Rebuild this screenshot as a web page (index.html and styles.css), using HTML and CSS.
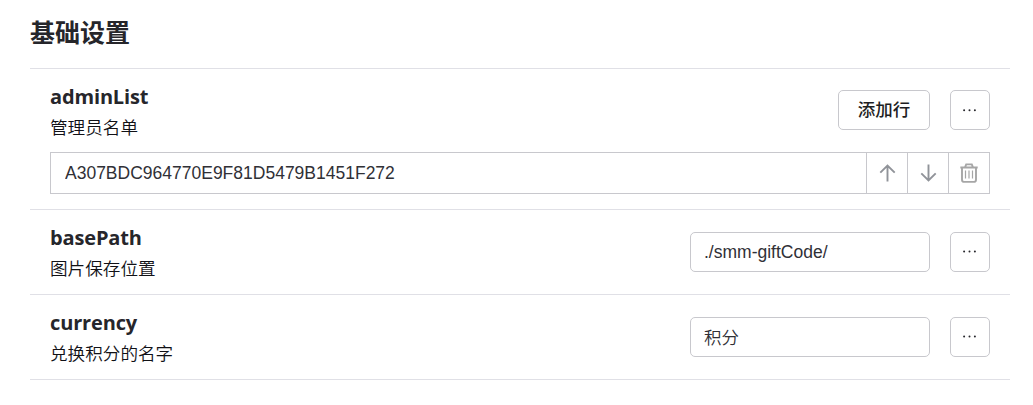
FILE: index.html
```html
<!DOCTYPE html>
<html lang="zh-CN">
<head>
    <meta charset="UTF-8">
    <meta name="viewport" content="width=device-width, initial-scale=1.0">
    <title>基础设置</title>
    <link rel="stylesheet" href="styles.css">
</head>
<body>
    <form class="settings">
        <h2 class="settings-title">基础设置</h2>

        <div class="item">
            <div class="item-main item-main-list">
                <div class="item-info">
                    <h3 class="item-name">adminList</h3>
                    <p class="item-desc">管理员名单</p>
                </div>
                <button type="button" class="btn btn-add">添加行</button>
                <button type="button" class="btn btn-more"><svg width="14" height="4" viewBox="0 0 14 4"><circle cx="1.1" cy="2.3" r="1"/><circle cx="6.5" cy="2.3" r="1"/><circle cx="11.9" cy="2.3" r="1"/></svg></button>
            </div>
            <div class="list-row">
                <input class="list-input" type="text" value="A307BDC964770E9F81D5479B1451F272">
                <button type="button" class="list-btn">
                    <svg width="20" height="20" viewBox="0 0 20 20"><path d="M10.5 18.5V2.5M3.3 9.7l7.2-7.2 7.2 7.2"/></svg>
                </button>
                <button type="button" class="list-btn">
                    <svg width="20" height="20" viewBox="0 0 20 20"><path d="M10.5 1.5v16M3.3 10.3l7.2 7.2 7.2-7.2"/></svg>
                </button>
                <button type="button" class="list-btn list-delete">
                    <svg width="20" height="20" viewBox="0 0 20 20"><path d="M1.3 4.5h17.4M6 4.3L7.2 1.4h5.6L14 4.3M3 4.8v11.9q0 2.2 2.2 2.2h9.6q2.2 0 2.2-2.2V4.8"/><path class="thin" d="M6.5 7.5v8M10 7.5v8M13.5 7.5v8"/></svg>
                </button>
            </div>
        </div>

        <div class="item">
            <div class="item-main">
                <div class="item-info">
                    <h3 class="item-name">basePath</h3>
                    <p class="item-desc">图片保存位置</p>
                </div>
                <input class="text-input" type="text" value="./smm-giftCode/">
                <button type="button" class="btn btn-more"><svg width="14" height="4" viewBox="0 0 14 4"><circle cx="1.1" cy="1.6" r="1"/><circle cx="6.5" cy="1.6" r="1"/><circle cx="11.9" cy="1.6" r="1"/></svg></button>
            </div>
        </div>

        <div class="item">
            <div class="item-main">
                <div class="item-info">
                    <h3 class="item-name">currency</h3>
                    <p class="item-desc">兑换积分的名字</p>
                </div>
                <input class="text-input text-light" type="text" value="积分">
                <button type="button" class="btn btn-more"><svg width="14" height="4" viewBox="0 0 14 4"><circle cx="1.1" cy="1.6" r="1"/><circle cx="6.5" cy="1.6" r="1"/><circle cx="11.9" cy="1.6" r="1"/></svg></button>
            </div>
        </div>
    </form>
</body>
</html>
```
FILE: styles.css
```css
* {
    box-sizing: border-box;
}
body {
    margin: 0;
    background-color: #fff;
    color: #26262b;
    font-family: "Open Sans", "Noto Sans CJK SC", sans-serif;
}
.settings {
    width: 980px;
    margin-left: 30px;
}
.settings-title {
    margin: 0;
    height: 69px;
    padding-top: 14px;
    border-bottom: 1px solid #e0e0e6;
    font-size: 25px;
    line-height: 36px;
}
.item {
    padding: 0 20px;
    border-bottom: 1px solid #e0e0e6;
}
.item-main {
    display: flex;
    align-items: center;
    gap: 20px;
    height: 84px;
}
.item-main-list .btn {
    margin-bottom: 2px;
}
.item-info {
    flex: 1;
    padding-top: 2px;
}
.item-name {
    margin: 0;
    font-size: 20px;
    font-weight: 700;
    letter-spacing: -0.15px;
    line-height: 30px;
}
.item-desc {
    margin: 0;
    color: #111116;
    font-size: 17.6px;
    font-weight: 350;
    line-height: 30px;
}
.btn {
    height: 40px;
    padding: 0;
    border: 1px solid #c8c8cd;
    border-radius: 5px;
    background-color: #fff;
    color: #1e1e23;
    font-family: "Noto Sans CJK SC", sans-serif;
    font-size: 17.5px;
}
.btn-add {
    width: 92px;
    padding-bottom: 4px;
    font-weight: 500;
}
.btn-more {
    display: flex;
    align-items: center;
    justify-content: center;
    width: 40px;
    fill: #26262b;
}
.text-input {
    width: 240px;
    height: 40px;
    padding: 0 13px;
    border: 1px solid #c8c8cd;
    border-radius: 5px;
    color: #303036;
    font-family: "Liberation Sans", "Noto Sans CJK SC", sans-serif;
    font-size: 17.5px;
}
.text-light {
    padding-bottom: 1px;
    font-weight: 350;
}
.list-row {
    display: flex;
    height: 42px;
    margin: -1px 0 15px;
    border: 1px solid #c8c8cd;
}
.list-input {
    flex: 1;
    min-width: 0;
    padding: 0 14px;
    border: none;
    color: #303036;
    font-family: "Liberation Sans", sans-serif;
    font-size: 17.5px;
}
.list-btn {
    display: flex;
    align-items: center;
    justify-content: center;
    width: 41px;
    padding: 0;
    border: none;
    border-left: 1px solid #c8c8cd;
    background-color: #fff;
}
.list-btn svg {
    fill: none;
    stroke: #909399;
    stroke-width: 1.9;
}
.list-delete svg {
    stroke: #a6a6a6;
}
.list-delete .thin {
    stroke-width: 1.2;
}
```
